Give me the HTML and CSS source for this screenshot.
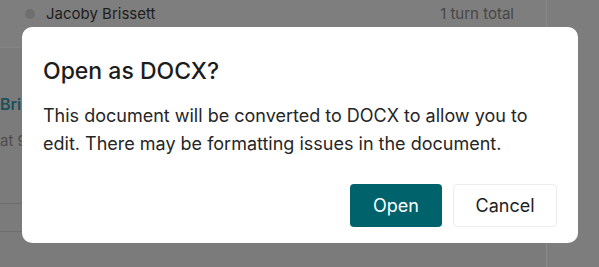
FILE: index.html
```html
<!DOCTYPE html>
<html lang="en">
<head>
<meta charset="utf-8">
<title>Open as DOCX?</title>
<link rel="stylesheet" href="styles.css">
</head>
<body>
<div class="app">
  <div class="main">
    <div class="top-row">
      <span class="dot"></span>
      <span class="name">Jacoby Brissett</span>
      <span class="turns">1 turn total</span>
    </div>
    <div class="card">
      <div class="card-title">Bris</div>
      <div class="card-meta">at 9</div>
    </div>
    <div class="row-line"></div>
  </div>
  <div class="side"></div>
</div>

<div class="modal" role="dialog" aria-labelledby="dlg-title">
  <h2 class="modal-title" id="dlg-title">Open as DOCX?</h2>
  <p class="modal-text">This document will be converted to DOCX to allow you to edit. There may be formatting issues in the document.</p>
  <div class="modal-actions">
    <button class="btn btn-primary">Open</button>
    <button class="btn btn-secondary">Cancel</button>
  </div>
</div>
</body>
</html>
```

FILE: styles.css
```css
* { box-sizing: border-box; }

html, body {
  margin: 0;
  padding: 0;
  width: 599px;
  height: 267px;
  overflow: hidden;
}

body {
  background: #7b7b7b;
  font-family: Inter, "Noto Sans", "Liberation Sans", sans-serif;
  position: relative;
}

.app {
  display: flex;
  height: 267px;
}

.main {
  width: 546px;
  display: flex;
  flex-direction: column;
}

.side {
  flex: 1;
  border-left: 1px solid #8a8a8a;
  background: #7d7d7d;
}

.top-row {
  height: 48px;
  display: flex;
  align-items: flex-start;
  padding: 4px 32px 0 25px;
  border-bottom: 1px solid #858585;
  background: #7e7e7e;
}

.dot {
  width: 10px;
  height: 10px;
  border-radius: 50%;
  background: #6f6f6f;
  margin-top: 5px;
  margin-right: 11px;
}

.name {
  font-size: 15px;
  line-height: 20px;
  color: #1d1d1d;
}

.turns {
  margin-left: auto;
  font-size: 15px;
  line-height: 20px;
  color: #474747;
}

.card {
  height: 156px;
  padding: 45px 0 0 0;
  border-bottom: 1px solid #6d6d6d;
}

.card-title {
  font-size: 16px;
  line-height: 22px;
  font-weight: 600;
  color: #1d4f5c;
}

.card-meta {
  margin-top: 16px;
  font-size: 15px;
  line-height: 20px;
  color: #4d4d4d;
}

.row-line {
  height: 28px;
  border-bottom: 1px solid #6e6e6e;
}

.modal {
  position: absolute;
  left: 22px;
  top: 27px;
  width: 556px;
  height: 216px;
  background: #ffffff;
  border-radius: 10px;
  padding: 30px 21px 16px 21px;
  display: flex;
  flex-direction: column;
}

.modal-title {
  margin: 0;
  font-size: 23px;
  line-height: 28px;
  font-weight: 500;
  color: #1c1c1c;
}

.modal-text {
  margin: 17px 0 0 0;
  font-size: 18px;
  line-height: 28px;
  color: #262626;
}

.modal-actions {
  margin-top: auto;
  display: flex;
  justify-content: flex-end;
  gap: 11px;
}

.btn {
  height: 43px;
  font-family: inherit;
  font-size: 18px;
  border-radius: 4px;
  cursor: pointer;
}

.btn-primary {
  width: 92px;
  background: #00626a;
  color: #ffffff;
  border: none;
}

.btn-secondary {
  width: 104px;
  background: #ffffff;
  color: #1e1e1e;
  border: 1px solid #ececec;
}
```
